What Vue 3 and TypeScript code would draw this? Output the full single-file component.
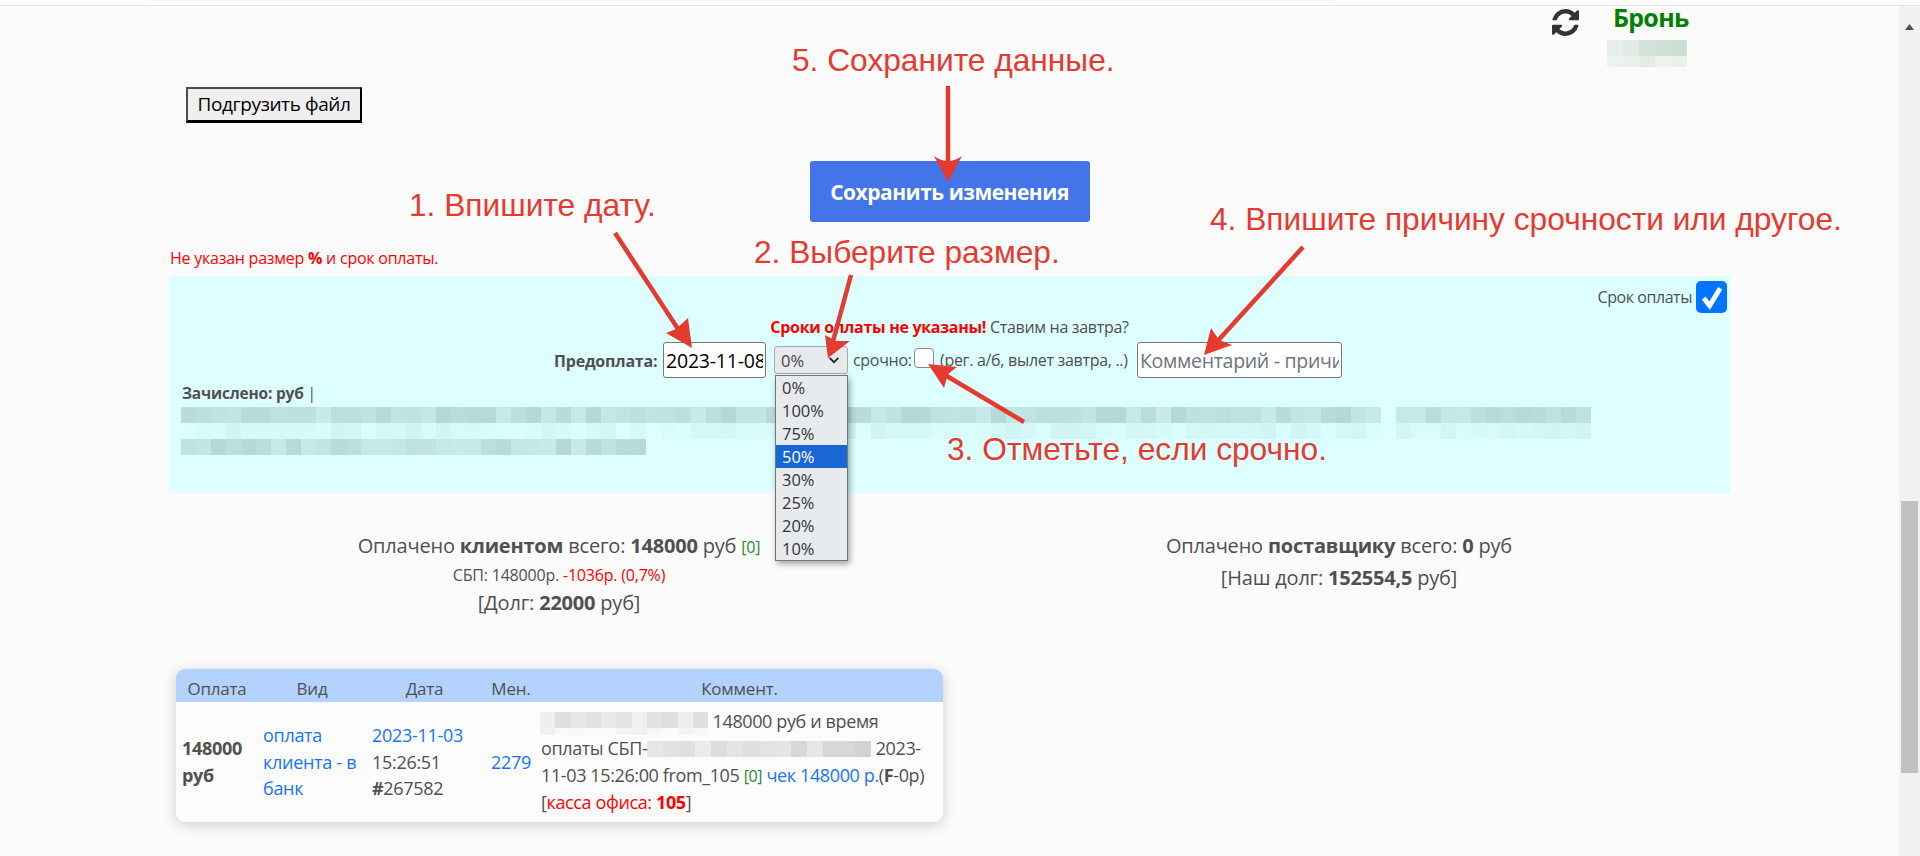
<script setup lang="ts">
const percents = ['0%', '100%', '75%', '50%', '30%', '25%', '20%', '10%']

function hash(i: number, seed: number): number {
  const v = Math.sin(i * 12.9898 + seed * 78.233) * 43758.5453
  return v - Math.floor(v)
}

function cells(n: number, seed: number, lo: number, hi: number, rgb: string): string[] {
  return Array.from({ length: n }, (_, i) => {
    const a = lo + (hi - lo) * hash(i + 1, seed)
    return `rgba(${rgb},${a.toFixed(3)})`
  })
}

const teal = '90,130,130'
const grey = '120,120,120'
const green = '60,130,80'

const blurRows = [
  { key: 'a1', cols: cells(80, 1, 0.16, 0.32, teal), gap: cells(13, 5, 0.16, 0.3, teal) },
  { key: 'a2', cols: cells(80, 2, 0.0, 0.09, teal), gap: cells(13, 6, 0.03, 0.09, teal) },
]
const blurRow3 = cells(31, 3, 0.16, 0.32, teal)
const tblBlurA = [cells(11, 7, 0.08, 0.22, grey), cells(11, 8, 0.01, 0.08, grey)]
const tblBlurB = [cells(14, 9, 0.1, 0.32, grey), cells(14, 10, 0.0, 0.02, grey)]
const bronBlur = [cells(5, 11, 0.1, 0.25, green), cells(5, 12, 0.06, 0.12, green)]
</script>

<template>
  <div class="page">
    <main class="main">
      <div class="topline"><div class="topline-inner"></div></div>

      <div class="status">
        <svg class="sync" viewBox="128 128 1536 1536" aria-hidden="true">
          <path fill="#333" d="M1639 1056q0 5-1 7-64 268-268 434.5t-478 166.5q-146 0-282.5-55t-243.5-157l-129 129q-19 19-45 19t-45-19-19-45v-448q0-26 19-45t45-19h448q26 0 45 19t19 45-19 45l-137 137q71 66 161 102t187 36q134 0 250-65t186-179q11-17 53-117 8-23 30-23h192q13 0 22.5 9.5t9.5 22.5zm25-800v448q0 26-19 45t-45 19h-448q-26 0-45-19t-19-45 19-45l138-138q-148-137-349-137-134 0-250 65t-186 179q-11 17-53 117-8 23-30 23h-199q-13 0-22.5-9.5t-9.5-22.5v-7q65-268 270-434.5t480-166.5q146 0 284 55.5t245 156.5l130-129q19-19 45-19t45 19 19 45z"/>
        </svg>
        <div class="bron">
          <div class="bron-title">Бронь</div>
          <div class="bron-blur">
            <div v-for="(row, r) in bronBlur" :key="r" class="cellrow">
              <i v-for="(c, i) in row" :key="i" :style="{ background: c }"></i>
            </div>
          </div>
        </div>
      </div>

      <div class="container">
        <button class="upload" type="button">Подгрузить файл</button>

        <div class="save-wrap">
          <button class="save" type="button">Сохранить изменения</button>
        </div>

        <p class="warn">Не указан размер <b>%</b> и срок оплаты.</p>

        <section class="panel">
          <div class="term">
            <span>Срок оплаты</span>
            <span class="bigcheck">
              <svg viewBox="0 0 32 32" aria-hidden="true"><path d="M8 17l6 8L25 7" fill="none" stroke="#fff" stroke-width="5"/></svg>
            </span>
          </div>
          <div class="notice"><b>Сроки оплаты не указаны!</b> Ставим на завтра?</div>
          <div class="form">
            <label class="form-label">Предоплата:</label>
            <input class="date" type="text" value="2023-11-08" />
            <div class="select-box">
              <div class="select">
                <span>0%</span>
                <svg class="chev" viewBox="0 0 16 16" aria-hidden="true"><path d="M3 5.5l5 5 5-5" fill="none" stroke="#222" stroke-width="2"/></svg>
              </div>
              <ul class="dropdown">
                <li v-for="p in percents" :key="p" :class="{ active: p === '50%' }">{{ p }}</li>
              </ul>
            </div>
            <span class="urgent">срочно:</span>
            <span class="smallcheck"></span>
            <span class="hint">(рег. а/б, вылет завтра, ..)</span>
            <input class="comment" type="text" placeholder="Комментарий - причина" />
          </div>
          <div class="credited"><b>Зачислено: руб</b> |</div>
          <div class="blur">
            <div v-for="row in blurRows" :key="row.key" class="cellrow">
              <i v-for="(c, i) in row.cols" :key="i" :style="{ background: c }"></i>
              <em></em>
              <i v-for="(c, i) in row.gap" :key="'g' + i" :style="{ background: c }"></i>
            </div>
            <div class="cellrow">
              <i v-for="(c, i) in blurRow3" :key="i" :style="{ background: c }"></i>
            </div>
          </div>
        </section>

        <section class="summary">
          <div>
            <div class="sum-line">Оплачено <b>клиентом</b> всего: <b>148000</b> руб <small class="zero">[0]</small></div>
            <div class="sum-small">СБП: 148000р. <span class="red">-1036р. (0,7%)</span></div>
            <div class="sum-line">[Долг: <b>22000</b> руб]</div>
          </div>
          <div>
            <div class="sum-line">Оплачено <b>поставщику</b> всего: <b>0</b> руб</div>
            <div class="sum-line second">[Наш долг: <b>152554,5</b> руб]</div>
          </div>
        </section>

        <section class="card">
          <table>
            <thead>
              <tr>
                <th class="c1">Оплата</th>
                <th class="c2">Вид</th>
                <th class="c3">Дата</th>
                <th class="c4">Мен.</th>
                <th class="c5">Коммент.</th>
              </tr>
            </thead>
            <tbody>
              <tr>
                <td class="c1"><b>148000<br />руб</b></td>
                <td class="c2"><a>оплата<br />клиента - в<br />банк</a></td>
                <td class="c3"><a>2023-11-03</a><br />15:26:51<br /><b>#</b>267582</td>
                <td class="c4"><a>2279</a></td>
                <td class="c5">
                  <span class="tb tb-a">
                    <span v-for="(row, r) in tblBlurA" :key="r" class="cellrow">
                      <i v-for="(c, i) in row" :key="i" :style="{ background: c }"></i>
                    </span>
                  </span>
                  148000 руб и время<br />
                  оплаты СБП-<span class="tb tb-b">
                    <span v-for="(row, r) in tblBlurB" :key="r" class="cellrow">
                      <i v-for="(c, i) in row" :key="i" :style="{ background: c }"></i>
                    </span>
                  </span> 2023-<br />
                  11-03 15:26:00 from_105 <span class="zero">[0]</span> <a>чек 148000 р.</a>(<b>F</b>-0р)<br />
                  [<span class="red">касса офиса: <b>105</b></span>]
                </td>
              </tr>
            </tbody>
          </table>
        </section>
      </div>

      <svg class="arrows" width="1899" height="856" aria-hidden="true">
        <g stroke="#e53a30" stroke-width="4.5" fill="#e53a30">
          <line x1="948" y1="86" x2="948" y2="170" />
          <line x1="615" y1="233" x2="684" y2="338" />
          <line x1="851" y1="275" x2="832" y2="345" />
          <line x1="1024" y1="422" x2="940" y2="372" />
          <line x1="1303" y1="247" x2="1214" y2="345" />
        </g>
        <g fill="#e53a30">
          <path d="M948 182L934 156Q948 166 962 156Z" />
          <path d="M692 348L666 333L676 329L688 318Z" />
          <path d="M828 358L825 335L836 341L850 341Z" />
          <path d="M928 364L957 367L948 374L944 388Z" />
          <path d="M1204 355L1211 328L1219 340L1232 345Z" />
        </g>
      </svg>

      <div class="note n5">5. Сохраните данные.</div>
      <div class="note n1">1. Впишите дату.</div>
      <div class="note n2">2. Выберите размер.</div>
      <div class="note n3">3. Отметьте, если срочно.</div>
      <div class="note n4">4. Впишите причину срочности или другое.</div>
    </main>

    <aside class="scrollbar">
      <svg class="sb-up" viewBox="0 0 9 6" aria-hidden="true"><path d="M4.5 0L9 6H0Z" fill="#505050" /></svg>
      <div class="sb-thumb"></div>
    </aside>
  </div>
</template>

<style>
html, body { margin: 0; overflow: hidden; background: #fbfbfb; }
</style>

<style scoped>
.page {
  display: flex;
  height: 856px;
  overflow: hidden;
  font-family: "Open Sans", "Noto Sans", sans-serif;
  color: #505050;
  background: #fbfbfb;
}
.main { position: relative; flex: 1; min-width: 0; }
.scrollbar {
  position: relative;
  width: 21px;
  margin-top: 6px;
  background: #f1f1f1;
}
.sb-up { position: absolute; left: 6px; top: 18px; width: 9px; height: 6px; }
.sb-thumb { position: absolute; left: 2px; top: 495px; width: 17px; height: 272px; background: #c1c1c1; }

.topline { height: 5px; background: #fff; border-bottom: 1px solid #e3e3e3; margin-right: -21px; }
.topline-inner { height: 1px; margin-left: 150px; width: 1185px; background: #f4f4f4; }

.status { display: flex; justify-content: flex-end; height: 66px; padding-right: 212px; }
.sync { width: 27px; height: 27px; margin: 3px 28px 0 0; }
.bron { width: 80px; }
.bron-title { font-size: 25px; line-height: 30px; height: 33px; margin: -4px 0 4px 6px; font-weight: 700; color: #008000; text-align: center; white-space: nowrap; letter-spacing: -0.7px; }
.bron-blur { margin-top: 5px; width: 80px; }
.bron-blur .cellrow i { width: 16px; height: 16px; }
.bron-blur .cellrow + .cellrow i { height: 11px; }

.cellrow { display: flex; }
.cellrow i { display: block; flex: none; width: 15px; height: 16px; }

.container { margin-left: 169px; width: 1561px; }

.upload {
  display: block;
  margin: 15px 0 0 17px;
  width: 176px;
  height: 36px;
  padding: 0;
  box-sizing: border-box;
  background: #efefef;
  border-style: solid;
  border-width: 2px 2px 3px 2px;
  border-color: #4d4d4d #000 #000 #4d4d4d;
  font: 19px/1 "Open Sans", sans-serif;
  letter-spacing: -0.4px;
  white-space: nowrap;
  color: #000;
}
.save-wrap { display: flex; justify-content: center; margin-top: 38px; }
.save {
  width: 280px;
  height: 61px;
  border: 0;
  border-radius: 3px;
  background: #4375e8;
  color: #fff;
  font: 700 21px "Open Sans", sans-serif;
  letter-spacing: -0.5px;
  white-space: nowrap;
}
.warn { margin: 27px 0 0 1px; height: 27px; font-size: 16px; line-height: 19px; color: #f00; letter-spacing: -0.24px; white-space: nowrap; }
.panel { height: 217px; background: #dff; position: relative; }
.term { display: flex; justify-content: flex-end; align-items: center; height: 38px; padding: 3px 3px 0 0; box-sizing: border-box; font-size: 16px; letter-spacing: -0.45px; gap: 4px; }
.bigcheck { width: 31px; height: 32px; border-radius: 5px; background: #0075ff; display: block; flex: none; }
.bigcheck svg { display: block; width: 31px; height: 32px; }
.notice { text-align: center; margin: 3px 0 0 0; height: 25px; line-height: 20px; font-size: 16px; letter-spacing: -0.3px; }
.notice b { color: #f00; }
.form { display: flex; align-items: flex-start; margin-left: 385px; height: 37px; }
.form-label { font-weight: 700; font-size: 16px; line-height: 38px; letter-spacing: -0.2px; width: 109px; white-space: nowrap; }
.date, .comment {
  box-sizing: border-box;
  height: 36px;
  padding: 0 2px;
  border: 1px solid #767676;
  border-radius: 3px;
  background: #fff;
  font: 19.5px "Open Sans", sans-serif;
  color: #000;
  outline: 0;
}
.date { width: 103px; letter-spacing: -0.2px; }
.select-box { position: relative; margin: 4px 0 0 8px; }
.select {
  box-sizing: border-box;
  width: 74px;
  height: 28px;
  padding: 0 6px;
  display: flex;
  align-items: center;
  justify-content: space-between;
  background: #e6eaed;
  border: 1px solid #a9a9a9;
  border-radius: 3px;
  font-size: 16.5px;
  color: #444;
}
.chev { width: 14px; height: 14px; }
.dropdown {
  position: absolute;
  z-index: 3;
  left: 1px;
  top: 29px;
  width: 73px;
  box-sizing: border-box;
  margin: 0;
  padding: 0;
  list-style: none;
  background: #e8ebee;
  border: 1px solid #757575;
  box-shadow: 2px 3px 6px rgba(0, 0, 0, 0.35);
  font-size: 16.5px;
  color: #333;
}
.dropdown li { height: 23px; line-height: 23px; padding-left: 6px; }
.dropdown li.active { background: #1a66d4; color: #fff; }
.urgent { width: 59px; margin-left: 5px; line-height: 36px; font-size: 16px; letter-spacing: -0.3px; white-space: nowrap; }
.smallcheck { width: 20px; height: 20px; margin: 6px 0 0 2px; box-sizing: border-box; background: #fff; border: 1.5px solid #8a8a8a; border-radius: 4px; flex: none; }
.hint { margin-left: 6px; width: 197px; line-height: 36px; white-space: nowrap; letter-spacing: -0.3px; font-size: 16px; }
.comment { width: 205px; letter-spacing: -0.3px; }
.comment::placeholder { color: #6c757d; opacity: 1; }
.credited { margin: 4px 0 0 13px; height: 24px; line-height: 20px; font-size: 15.5px; letter-spacing: -0.2px; }
.blur { margin-left: 12px; }
.blur .cellrow em { display: block; width: 14px; margin-left: 1px; }
.summary { display: grid; grid-template-columns: 780px 780px; margin-top: 38px; text-align: center; }
.sum-line { font-size: 20px; line-height: 30px; letter-spacing: -0.2px; white-space: nowrap; }
.sum-line.second { margin-top: 2px; }
.sum-small { font-size: 16px; line-height: 26px; letter-spacing: -0.2px; }
.zero { color: #2e8b2e; font-size: 16px; }
.red { color: #f00; }
.card {
  margin: 51px 0 0 7px;
  width: 767px;
  height: 153px;
  background: #fcfcfc;
  border-radius: 9px;
  overflow: hidden;
  box-shadow: 0 3px 14px rgba(0, 0, 0, 0.18);
}
table { border-collapse: collapse; width: 767px; table-layout: fixed; font-size: 18px; line-height: 26.6px; letter-spacing: -0.3px; }
thead tr { background: #b3d2ff; }
th { box-sizing: border-box; height: 33px; padding: 6px 0 0; line-height: 26px; font-weight: 400; text-align: center; font-size: 17px; letter-spacing: -0.2px; }
td { padding: 0; height: 120px; vertical-align: middle; white-space: nowrap; }
.c1 { width: 82px; box-sizing: border-box; }
.c2 { width: 108px; }
.c3 { width: 121px; }
.c4 { width: 51px; }
td.c1 { padding-left: 6px; }
td.c2 { padding-left: 5px; }
td.c3 { padding-left: 6px; }
td.c4 { padding-left: 4px; }
td.c5 { padding-left: 3px; letter-spacing: -0.38px; }
th.c3 { padding-right: 4px; }
th.c4 { padding-right: 3px; }
th.c5 { padding-right: 2px; }
a { color: #1a73ff; }
.tb { display: inline-block; vertical-align: middle; margin-left: -1px; }
.tb .cellrow { display: flex; }
.tb .cellrow i { width: 15.3px; }
.tb-a .cellrow + .cellrow i { height: 7px; }
.tb-b { margin-left: 0; }
.tb-b .cellrow i { width: 16px; }
.tb-b .cellrow + .cellrow i { height: 2px; }

.arrows { position: absolute; inset: 0; z-index: 5; pointer-events: none; }
.note {
  position: absolute;
  z-index: 6;
  font-family: "Liberation Sans", Arial, sans-serif;
  font-size: 31.7px;
  line-height: 38px;
  color: #e53a30;
  white-space: nowrap;
}
.n5 { left: 792px; top: 41px; }
.n1 { left: 409px; top: 186px; }
.n2 { left: 754px; top: 233px; }
.n3 { left: 947px; top: 430px; }
.n4 { left: 1210px; top: 200px; }
</style>
